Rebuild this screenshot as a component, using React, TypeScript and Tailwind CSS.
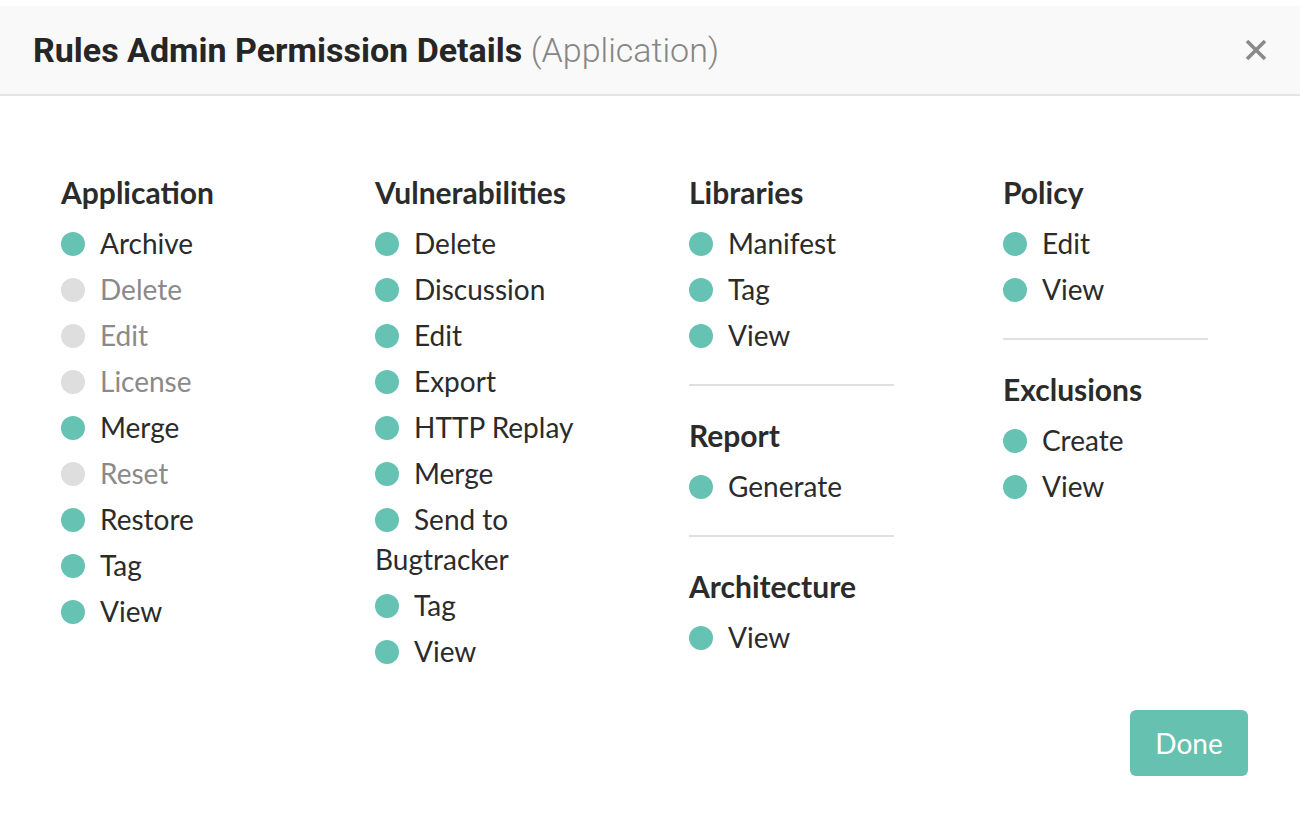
type Perm = { label: string; on: boolean };
type Group = { title: string; perms: Perm[] };

const on = (label: string): Perm => ({ label, on: true });
const off = (label: string): Perm => ({ label, on: false });

const columns: Group[][] = [
  [
    {
      title: 'Application',
      perms: [on('Archive'), off('Delete'), off('Edit'), off('License'), on('Merge'), off('Reset'), on('Restore'), on('Tag'), on('View')],
    },
  ],
  [
    {
      title: 'Vulnerabilities',
      perms: [on('Delete'), on('Discussion'), on('Edit'), on('Export'), on('HTTP Replay'), on('Merge'), on('Send to Bugtracker'), on('Tag'), on('View')],
    },
  ],
  [
    { title: 'Libraries', perms: [on('Manifest'), on('Tag'), on('View')] },
    { title: 'Report', perms: [on('Generate')] },
    { title: 'Architecture', perms: [on('View')] },
  ],
  [
    { title: 'Policy', perms: [on('Edit'), on('View')] },
    { title: 'Exclusions', perms: [on('Create'), on('View')] },
  ],
];

export default function App() {
  return (
    <div className="min-h-[832px] bg-white pt-[6px] font-['Lato',sans-serif]">
      {/* Header */}
      <div className="flex h-[90px] items-center justify-between border-b-2 border-[#e3e3e3] bg-[#f9f9f9] pl-[33px] pr-[33px]">
        <h1 className="font-['Roboto',sans-serif] text-[34px] leading-none">
          <span className="font-bold text-[#262626]">Rules Admin Permission Details</span>{' '}
          <span className="font-light text-[#858585]">(Application)</span>
        </h1>
        <svg width="22" height="22" viewBox="0 0 22 22" className="text-[#8a8a8a]">
          <path d="M2 2 L20 20 M20 2 L2 20" stroke="currentColor" strokeWidth="3.6" />
        </svg>
      </div>

      {/* Body */}
      <div className="flex pl-[61px] pt-[73px]">
        {columns.map((groups, ci) => (
          <div key={ci} className="w-[314px] shrink-0">
            <div className="w-[205px]">
              {groups.map((g, gi) => (
                <div key={g.title}>
                  {gi > 0 && <div className="my-[26px] h-[2px] bg-[#e0e0e0]" />}
                  <h3 className="mb-[5px] text-[30px] font-bold leading-[46px] text-[#2b2b2b]">{g.title}</h3>
                  {g.perms.map((p) => (
                    <div
                      key={p.label}
                      className={`pt-[3px] pb-[3px] text-[28px] leading-[40px] ${p.on ? 'text-[#2b2b2b]' : 'text-[#8a8a8a]'}`}
                    >
                      <span
                        className={`mr-[15px] inline-block h-[24px] w-[24px] rounded-full align-[-2px] ${p.on ? 'bg-[#66c2b2]' : 'bg-[#dedede]'}`}
                      />
                      {p.label}
                    </div>
                  ))}
                </div>
              ))}
            </div>
          </div>
        ))}
      </div>

      {/* Footer */}
      <div className="flex justify-end pr-[52px] pt-[36px]">
        <button className="h-[66px] w-[118px] rounded-[6px] bg-[#67c1b1] text-[28px] text-white">Done</button>
      </div>
    </div>
  );
}
